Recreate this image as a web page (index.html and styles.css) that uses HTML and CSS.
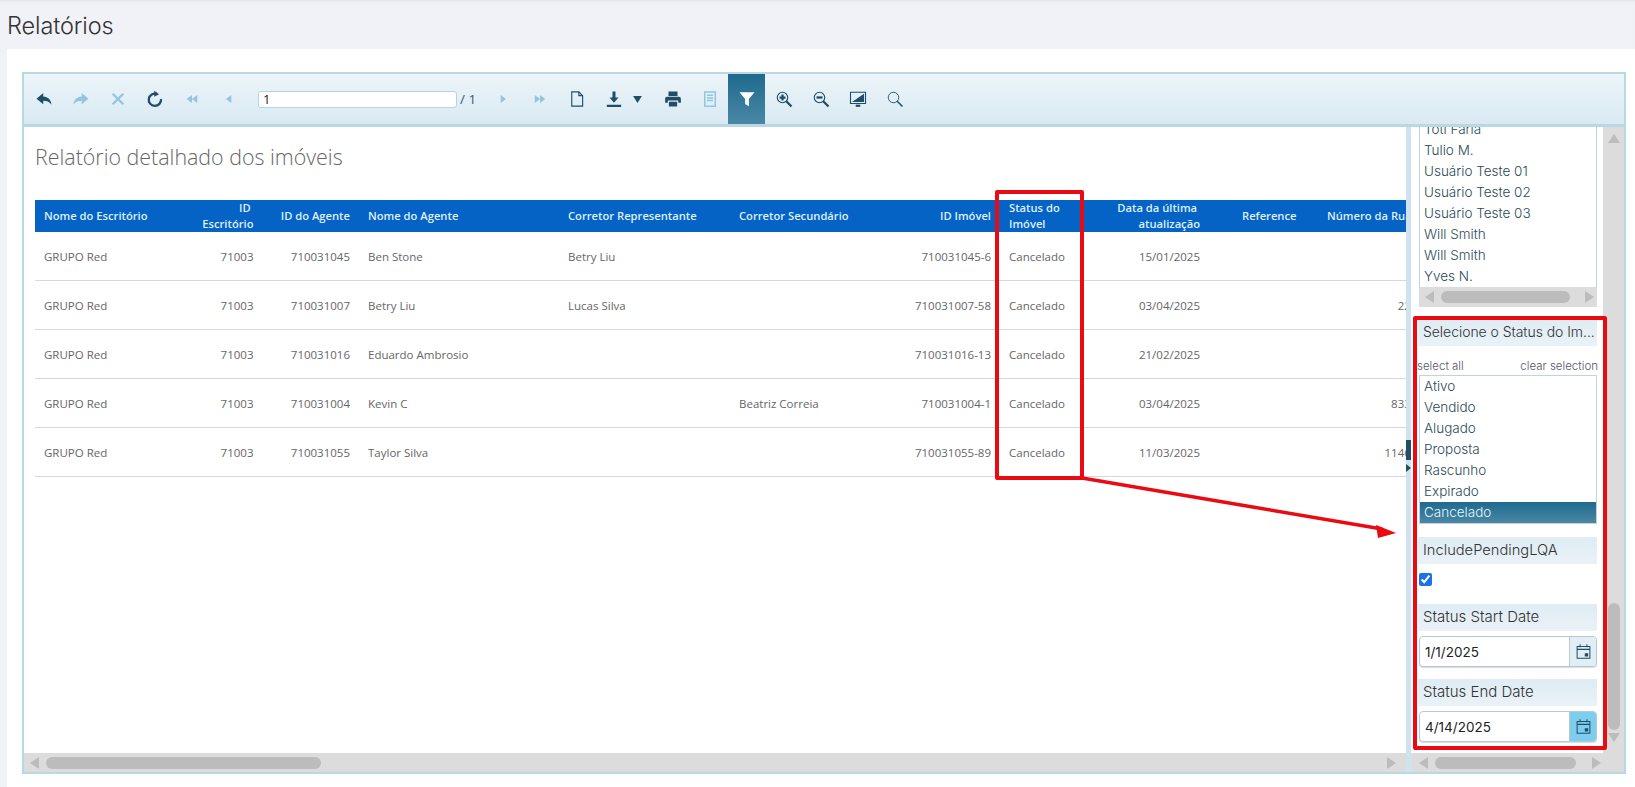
FILE: index.html
```html
<!DOCTYPE html>
<html lang="pt-BR">
<head>
<meta charset="utf-8">
<title>Relatórios</title>
<link rel="stylesheet" href="styles.css">
</head>
<body>
<div class="page">
  <h1 class="page-title">Relatórios</h1>
  <div class="card">
    <div class="viewer">
      <div class="toolbar">
        <span class="tb"><svg viewBox="0 0 24 24" class="ic dark"><path d="M11 4 2 11.500 11 19v-4.600c4.600 0 8 1.200 11 5.100-.8-6.500-4.500-10.300-11-10.700z"/></svg></span>
        <span class="tb"><svg viewBox="0 0 24 24" class="ic soft"><path d="M13 4l9 7.500-9 7.500v-4.600c-4.600 0-8 1.200-11 5.100.8-6.500 4.500-10.300 11-10.700z"/></svg></span>
        <span class="tb"><svg viewBox="0 0 24 24" class="ic soft"><path d="M5 5l14 14M19 5 5 19" class="st3"/></svg></span>
        <span class="tb"><svg viewBox="0 0 24 24" class="ic dark"><path d="M14.500 5.200A8.200 8.200 0 1 0 20 12" class="st3"/><path d="M11 1l6.500 4.500L11 9z"/></svg></span>
        <span class="tb"><svg viewBox="0 0 24 24" class="ic soft small"><path d="M12 5v14L3 12zM21 5v14l-9-7z"/></svg></span>
        <span class="tb"><svg viewBox="0 0 24 24" class="ic soft small"><path d="M16 5v14L7 12z"/></svg></span>
        <input class="page-input" type="text" value="1" aria-label="Página">
        <span class="page-total">/ 1</span>
        <span class="tb"><svg viewBox="0 0 24 24" class="ic soft small"><path d="M8 5v14l9-7z"/></svg></span>
        <span class="tb"><svg viewBox="0 0 24 24" class="ic soft small"><path d="M3 5v14l9-7zM12 5v14l9-7z"/></svg></span>
        <span class="tb"><svg viewBox="0 0 24 24" class="ic dark"><path d="M5 2.500h9.500L19.500 7.500V21.500H5zM14.500 2.500v5h5" class="st15"/></svg></span>
        <span class="tb tb-wide"><svg viewBox="0 0 24 24" class="ic dark"><path d="M10 2h4v8h4l-6 7-6-7h4zM2.500 19.500h19v3h-19z"/></svg><svg viewBox="0 0 10 8" class="caret"><path d="M0 0h10L5 8z"/></svg></span>
        <span class="tb"><svg viewBox="0 0 24 24" class="ic dark"><path d="M6 2h12v6H6zM4 9h16a2.500 2.500 0 0 1 2.500 2.500V17H19v-3H5v3H1.500v-5.500A2.500 2.500 0 0 1 4 9zM6.500 15.500h11V22h-11z"/></svg></span>
        <span class="tb"><svg viewBox="0 0 24 24" class="ic soft"><path d="M5 2.500h14v19H5zM8 7h8M8 10.500h8M8 14h8" class="st2"/></svg></span>
        <span class="tb tb-active"><svg viewBox="0 0 24 24" class="ic white"><path d="M2 3h20l-7.500 9v9.500l-5-3V12z"/></svg></span>
        <span class="tb"><svg viewBox="0 0 24 24" class="ic dark"><circle cx="10" cy="10" r="7" class="st15"/><path d="M10 6v8M6 10h8" class="st3"/><path d="M15 15l7 7" class="st3"/></svg></span>
        <span class="tb"><svg viewBox="0 0 24 24" class="ic dark"><circle cx="10" cy="10" r="7" class="st15"/><path d="M6 10h8" class="st3"/><path d="M15 15l7 7" class="st3"/></svg></span>
        <span class="tb"><svg viewBox="0 0 24 24" class="ic dark"><path d="M2 3h20v15H2z" class="st15"/><path d="M4 16 20 5v11z"/><path d="M9 21h6" class="st3"/></svg></span>
        <span class="tb"><svg viewBox="0 0 24 24" class="ic dark"><circle cx="10" cy="10" r="7" class="st12"/><path d="M15 15l7 7" class="st2"/></svg></span>
      </div>
      <div class="viewer-main">
        <div class="report">
          <div class="report-scroll">
            <h2 class="report-title">Relatório detalhado dos imóveis</h2>
            <table class="grid">
              <colgroup>
                <col class="c1"><col class="c2"><col class="c3"><col class="c4"><col class="c5"><col class="c6"><col class="c7"><col class="c8"><col class="c9"><col class="c10"><col class="c11">
              </colgroup>
              <thead>
                <tr>
                  <th>Nome do Escritório</th>
                  <th class="r">ID&nbsp;<br>Escritório</th>
                  <th class="r">ID do Agente</th>
                  <th>Nome do Agente</th>
                  <th>Corretor Representante</th>
                  <th>Corretor Secundário</th>
                  <th class="r">ID Imóvel</th>
                  <th>Status do<br>Imóvel</th>
                  <th class="r">Data da última&nbsp;<br>atualização</th>
                  <th class="ref">Reference</th>
                  <th>Número da Rua</th>
                </tr>
              </thead>
              <tbody>
                <tr><td>GRUPO Red</td><td class="r">71003</td><td class="r">710031045</td><td>Ben Stone</td><td>Betry Liu</td><td></td><td class="r">710031045-6</td><td>Cancelado</td><td class="r">15/01/2025</td><td></td><td class="r"></td></tr>
                <tr><td>GRUPO Red</td><td class="r">71003</td><td class="r">710031007</td><td>Betry Liu</td><td>Lucas Silva</td><td></td><td class="r">710031007-58</td><td>Cancelado</td><td class="r">03/04/2025</td><td></td><td class="r">2215</td></tr>
                <tr><td>GRUPO Red</td><td class="r">71003</td><td class="r">710031016</td><td>Eduardo Ambrosio</td><td></td><td></td><td class="r">710031016-13</td><td>Cancelado</td><td class="r">21/02/2025</td><td></td><td class="r"></td></tr>
                <tr><td>GRUPO Red</td><td class="r">71003</td><td class="r">710031004</td><td>Kevin C</td><td></td><td>Beatriz Correia</td><td class="r">710031004-1</td><td>Cancelado</td><td class="r">03/04/2025</td><td></td><td class="r">83350</td></tr>
                <tr><td>GRUPO Red</td><td class="r">71003</td><td class="r">710031055</td><td>Taylor Silva</td><td></td><td></td><td class="r">710031055-89</td><td>Cancelado</td><td class="r">11/03/2025</td><td></td><td class="r">114600</td></tr>
              </tbody>
            </table>
          </div>
          <div class="hbar hbar-main"><span class="arr arr-l"></span><span class="thumb thumb-main"></span><span class="arr arr-r"></span></div>
        </div>
        <div class="splitter"><span class="split-handle"></span><span class="split-arrow"></span></div>
        <div class="panel">
          <div class="panel-body">
            <div class="panel-content">
              <div class="listbox listbox-users">
                <ul class="items">
                  <li>Toti Faria</li><li>Tulio M.</li><li>Usuário Teste 01</li><li>Usuário Teste 02</li><li>Usuário Teste 03</li><li>Will Smith</li><li>Will Smith</li><li>Yves N.</li>
                </ul>
                <div class="hbar hbar-list"><span class="arr arr-l"></span><span class="thumb"></span><span class="arr arr-r"></span></div>
              </div>
              <div class="param-head param-status">Selecione o Status do Im...</div>
              <div class="links"><span>select all</span><span>clear selection</span></div>
              <ul class="items listbox">
                <li>Ativo</li><li>Vendido</li><li>Alugado</li><li>Proposta</li><li>Rascunho</li><li>Expirado</li><li class="selected">Cancelado</li>
              </ul>
              <div class="param-head param-lqa">IncludePendingLQA</div>
              <input class="check" type="checkbox" checked aria-label="IncludePendingLQA">
              <div class="param-head param-start">Status Start Date</div>
              <div class="date">
                <input type="text" value="1/1/2025" aria-label="Status Start Date">
                <span class="date-btn"><svg viewBox="0 0 20 20" class="cal"><path d="M2.500 4h15v14h-15zM2.500 7.500h15M6 1.500V5M14 1.500V5" class="st12"/><path d="M11.500 12h4v4h-4z"/></svg></span>
              </div>
              <div class="param-head param-end">Status End Date</div>
              <div class="date date-active">
                <input type="text" value="4/14/2025" aria-label="Status End Date">
                <span class="date-btn"><svg viewBox="0 0 20 20" class="cal"><path d="M2.500 4h15v14h-15zM2.500 7.500h15M6 1.500V5M14 1.500V5" class="st12"/><path d="M11.500 12h4v4h-4z"/></svg></span>
              </div>
            </div>
            <div class="vbar"><span class="arr arr-u"></span><span class="vthumb"></span><span class="arr arr-d"></span></div>
          </div>
          <div class="hbar hbar-panel"><span class="arr arr-l"></span><span class="thumb"></span><span class="arr arr-r"></span></div>
        </div>
      </div>
    </div>
  </div>
  <div class="mark mark-col"></div>
  <div class="mark mark-panel"></div>
  <svg class="mark-arrow" viewBox="0 0 330 70"><path d="M2 1 302 52" class="arrow-line"/><path d="M316 56 296 48 298 61z" class="arrow-head"/></svg>
</div>
</body>
</html>
```

FILE: styles.css
```css
* { box-sizing: border-box; }
html, body { margin: 0; height: 100%; }
body { background: #f1f2f7; overflow: hidden; font-family: "Open Sans", "Liberation Sans", sans-serif; }
.page { position: relative; height: 787px; display: flex; flex-direction: column; box-shadow: inset 0 3px 3px -2px #dfe1e8; }
.page-title { margin: 0; height: 49px; padding: 11px 0 0 7px; font: 300 23.500px/30px Inter, "Liberation Sans", sans-serif; color: #333; letter-spacing: -.1px; }
.card { flex: 1; margin-left: 7px; background: #fff; padding: 23px 9px 13px 15px; display: flex; min-height: 0; }
.viewer { flex: 1; min-width: 0; display: flex; flex-direction: column; border: 2px solid #b9d8e4; }

.toolbar { height: 53px; flex: none; display: flex; align-items: stretch; padding-left: 1px; background: linear-gradient(#ecf5f9, #d9e9f3); border-bottom: 3px solid #b9d8e4; }
.tb { width: 37px; flex: none; display: flex; align-items: center; justify-content: center; gap: 10px; }
.tb-wide { width: 59px; padding-right: 3px; }
.tb-active { background: linear-gradient(#1f6a8e, #4a87a5); }
.ic { width: 18px; height: 18px; flex: none; }
.ic.small { width: 14px; height: 14px; }
.caret { width: 9px; height: 7px; fill: #1f4e66; }
.dark { fill: #1f4e66; stroke: #1f4e66; }
.soft { fill: #93c5dd; stroke: #93c5dd; }
.white { fill: #fff; }
.dark > *, .soft > * { stroke: none; }
.ic .st3 { fill: none; stroke-width: 3; }
.ic .st2 { fill: none; stroke-width: 2; }
.ic .st15 { fill: none; stroke-width: 1.500; }
.ic .st12 { fill: none; stroke-width: 1.200; }
.dark > .st3, .dark > .st2, .dark > .st15, .dark > .st12 { stroke: #1f4e66; }
.soft > .st3, .soft > .st2, .soft > .st15, .soft > .st12 { stroke: #93c5dd; }
.page-input { width: 199px; height: 17px; flex: none; align-self: center; margin-left: 11px; padding: 0 4px; border: 1px solid #b7d4e0; border-radius: 3px; background: #fff; font: 400 13px "Open Sans", sans-serif; color: #222; }
.page-total { width: 27px; flex: none; align-self: center; padding-left: 3px; font-size: 13.500px; color: #3a5a6a; white-space: nowrap; }

.viewer-main { flex: 1; min-height: 0; display: flex; }
.report { flex: 1; min-width: 0; display: flex; flex-direction: column; }
.report-scroll { flex: 1; min-height: 0; overflow: hidden; padding: 15px 0 0 11px; }
.report-title { margin: 0 0 28px; height: 30px; font: 300 21.400px/30px "Open Sans", sans-serif; color: #666; white-space: nowrap; }
.grid { border-collapse: collapse; table-layout: fixed; width: 1398px; font-size: 11.500px; }
.c1 { width: 127px; } .c2 { width: 100.500px; } .c3 { width: 96.500px; } .c4 { width: 200px; } .c5 { width: 171px; } .c6 { width: 135px; } .c7 { width: 135px; } .c8 { width: 100px; } .c9 { width: 109px; } .c10 { width: 109px; } .c11 { width: 115px; }
.grid th { height: 32px; padding: 0 9px; background: #0563c6; color: #dff0fb; font-weight: 600; font-size: 11.200px; line-height: 16px; text-align: left; white-space: nowrap; overflow: hidden; }
.grid td { height: 48.900px; padding: 0 9px; color: #666; border-bottom: 1px solid #d8d8d8; white-space: nowrap; overflow: hidden; }
.grid .r { text-align: right; }
.grid th.r { text-align: right; }
.grid th.ref { padding-left: 33px; }

.hbar { height: 19px; flex: none; background: #dcdcdc; display: flex; align-items: center; position: relative; }
.hbar-main { padding: 0 10px 0 6px; gap: 7px; }
.thumb { height: 12px; border-radius: 6px; background: #bcbcbc; }
.thumb-main { width: 275px; margin-right: auto; }
.arr { width: 0; height: 0; flex: none; border-style: solid; border-color: transparent; }
.arr-l { border-width: 6px 9px 6px 0; border-right-color: #bcbcbc; }
.arr-r { border-width: 6px 0 6px 9px; border-left-color: #bcbcbc; }
.arr-u { border-width: 0 6px 9px; border-bottom-color: #bcbcbc; }
.arr-d { border-width: 9px 6px 0; border-top-color: #bcbcbc; }

.splitter { width: 5px; flex: none; background: #cfe3ef; display: flex; flex-direction: column; align-items: center; padding-top: 313px; gap: 4px; }
.split-handle { width: 5px; height: 20px; background: #1f4e66; }
.split-arrow { width: 0; height: 0; border-style: solid; border-width: 4px 0 4px 5px; border-color: transparent transparent transparent #1f4e66; }

.panel { width: 213px; flex: none; display: flex; flex-direction: column; background: #fff; }
.panel-body { flex: 1; min-height: 0; display: flex; overflow: hidden; }
.panel-content { width: 192px; flex: none; padding: 0 6px 0 8px; font-family: Inter, "Liberation Sans", sans-serif; font-weight: 300; overflow: hidden; }
.listbox { border: 1px solid #c6d2d8; background: #fff; }
.listbox-users { margin-top: -8px; border-top: 0; }
.items { list-style: none; margin: 0; padding: 0; font-size: 13.500px; color: #2b4a58; }
.items li { height: 21px; line-height: 21px; padding-left: 4px; white-space: nowrap; }
.items li.selected { background: linear-gradient(#1f6a8e, #4a87a5); color: #eaf6fb; }
.hbar-list { height: 20px; padding: 0 3px 0 6px; gap: 7px; margin: 0 -1px -1px; }
.hbar-list .thumb { width: 129px; margin-right: auto; }
.param-head { height: 27px; padding-left: 5px; margin-left: -1px; line-height: 26px; font-size: 15px; color: #333; white-space: nowrap; overflow: hidden; background: linear-gradient(#dfecf4, #e9f2f7); }
.param-status { margin-top: 12px; font-size: 14px; letter-spacing: -.05px; }
.param-lqa { margin-top: 13px; font-size: 14.700px; }
.links { height: 29px; padding: 13px 0 0; margin: 0 -1px 0 -2px; display: flex; justify-content: space-between; font-size: 11.500px; line-height: 14px; color: #556; }
.check { display: block; width: 13px; height: 13px; margin: 9px 0 18px; accent-color: #1a73e8; }
.param-end { margin-top: 12px; }
.date { height: 31px; margin-top: 5px; display: flex; border: 1px solid #b9c9d1; border-radius: 4px; background: #fff; overflow: hidden; box-shadow: 0 1px 1px #d5dde2; }
.date input { flex: 1; min-width: 0; border: 0; padding: 0 4px 0 5px; background: transparent; font: 400 13.500px Inter, sans-serif; color: #222; outline: 0; }
.date-btn { width: 27px; flex: none; display: flex; align-items: center; justify-content: center; background: #e2eef5; border-left: 1px solid #b9c9d1; }
.date-active .date-btn { background: #7fcdee; }
.cal { width: 17px; height: 17px; fill: #1f4e66; }
.cal .st12 { fill: none; stroke: #1f4e66; stroke-width: 1.200; }

.vbar { flex: 1; background: #dcdcdc; display: flex; flex-direction: column; align-items: center; padding: 7px 0 11px; position: relative; }
.vthumb { width: 12px; height: 127px; margin-top: auto; margin-bottom: 3px; border-radius: 6px; background: #bcbcbc; }
.hbar-panel { padding: 0 23px 0 7px; gap: 7px; border-left: 1px solid #cfe3ef; }
.hbar-panel .thumb { width: 141px; margin-right: auto; }

.mark { position: absolute; border: 4px solid #ea0a12; border-radius: 2px; pointer-events: none; }
.mark-col { left: 995px; top: 190px; width: 89px; height: 290px; }
.mark-panel { left: 1413px; top: 316px; width: 194px; height: 434px; }
.mark-arrow { position: absolute; left: 1080px; top: 477px; width: 330px; height: 70px; overflow: visible; pointer-events: none; }
.arrow-line { fill: none; stroke: #ea0a12; stroke-width: 3.500; }
.arrow-head { fill: #ea0a12; }
```
